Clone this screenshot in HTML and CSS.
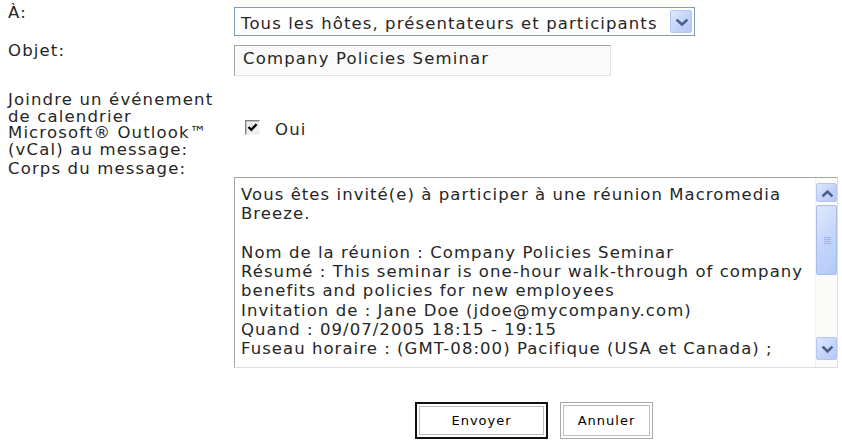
FILE: index.html
```html
<!DOCTYPE html>
<html lang="fr">
<head>
<meta charset="utf-8">
<title>Message</title>
<link rel="stylesheet" href="styles.css">
</head>
<body>
<div class="form">
  <div class="row r-to">
    <div class="label">À:</div>
    <div class="field">
      <div class="select">
        <span class="select-text">Tous les hôtes, présentateurs et participants</span>
        <span class="xp-btn select-btn"><svg viewBox="0 0 22 23" width="22" height="23"><path d="M6.5 9.5 L11 13.5 L15.5 9.5" fill="none" stroke="#4d5f86" stroke-width="2.6" stroke-linecap="square"/></svg></span>
      </div>
    </div>
  </div>
  <div class="row r-subject">
    <div class="label">Objet:</div>
    <div class="field"><div class="input">Company Policies Seminar</div></div>
  </div>
  <div class="row r-cal">
    <div class="label">Joindre un événement de calendrier Microsoft® Outlook™ (vCal) au message:</div>
    <div class="field field-check">
      <span class="checkbox"><svg viewBox="0 0 11 11" width="11" height="11"><path d="M1.5 5 L4.3 7.8 L9.6 2.2" fill="none" stroke="#000" stroke-width="2.4"/></svg></span>
      <span class="check-label">Oui</span>
    </div>
  </div>
  <div class="row r-body">
    <div class="label">Corps du message:</div>
    <div class="field">
      <div class="textarea">
        <div class="ta-text">Vous êtes invité(e) à participer à une réunion Macromedia
Breeze.

Nom de la réunion : Company Policies Seminar
Résumé : This seminar is one-hour walk-through of company
benefits and policies for new employees
Invitation de : Jane Doe (jdoe@mycompany.com)
Quand : 09/07/2005 18:15 - 19:15
Fuseau horaire : (GMT-08:00) Pacifique (USA et Canada) ;</div>
        <div class="scrollbar">
          <span class="xp-btn sb-up"><svg viewBox="0 0 21 19" width="21" height="19"><path d="M6.5 11.5 L10.5 7.5 L14.5 11.5" fill="none" stroke="#4d5f86" stroke-width="2.6" stroke-linecap="square"/></svg></span>
          <span class="xp-btn sb-thumb"><svg viewBox="0 0 21 70" width="21" height="70"><path d="M7 31.5 H14 M7 33.5 H14 M7 35.5 H14 M7 37.5 H14" stroke="#9fb3e2" stroke-width="1"/></svg></span>
          <span class="sb-track"></span>
          <span class="xp-btn sb-down"><svg viewBox="0 0 21 23" width="21" height="23"><path d="M6.5 9.5 L10.5 13.5 L14.5 9.5" fill="none" stroke="#4d5f86" stroke-width="2.6" stroke-linecap="square"/></svg></span>
        </div>
      </div>
    </div>
  </div>
  <div class="actions">
    <button class="btn btn-default" type="button">Envoyer</button>
    <button class="btn btn-cancel" type="button">Annuler</button>
  </div>
</div>
</body>
</html>
```

FILE: styles.css
```css
html, body {
  margin: 0;
  background: #ffffff;
}

body {
  font-family: "DejaVu Sans", Verdana, sans-serif;
  font-size: 16.5px;
  color: #262626;
  letter-spacing: 1.15px;
}

.form {
  padding: 5px 0 0 8px;
}

.row {
  display: flex;
}

.label {
  width: 226px;
  flex: none;
  line-height: 16.7px;
  padding-right: 8px;
  box-sizing: border-box;
}

.field {
  width: 604px;
  flex: none;
}

/* Row 1 : select */
.r-to .field {
  padding-top: 2px;
}

.select {
  width: 461px;
  height: 29px;
  box-sizing: border-box;
  border: 1px solid #7f9db9;
  background: #ffffff;
  display: flex;
}

.select-text {
  flex: 1;
  padding: 6px 0 0 6px;
  line-height: 19px;
  white-space: nowrap;
  overflow: hidden;
  letter-spacing: 1.1px;
}

.xp-btn {
  display: block;
  box-sizing: border-box;
  border: 1px solid #b3c5f0;
  border-radius: 2px;
  background: linear-gradient(135deg, #dfe8fe 0%, #c3d4fb 55%, #b5c9f6 100%);
}

.xp-btn svg {
  display: block;
}

.select-btn {
  width: 22px;
  margin: 2px 2px 2px 0;
  flex: none;
  overflow: hidden;
}

/* Row 2 : input */
.r-subject {
  margin-top: 7px;
}

.r-subject .field {
  padding-top: 2px;
}

.input {
  width: 377px;
  height: 31px;
  box-sizing: border-box;
  border: 1px solid;
  border-color: #a4a4a4 #e3e3e3 #e3e3e3 #a4a4a4;
  background: #fafafa;
  padding: 3px 0 0 8px;
  line-height: 19px;
  white-space: nowrap;
}

/* Row 3 : checkbox */
.r-cal {
  margin-top: 16px;
}

.field-check {
  display: flex;
  align-items: flex-start;
  padding-top: 28px;
}

.checkbox {
  width: 15px;
  height: 15px;
  box-sizing: border-box;
  margin-left: 11px;
  border: 1px solid;
  border-color: #808080 #f4f4f4 #f4f4f4 #808080;
  box-shadow: inset 1px 1px 0 #c4c4c4;
  background: #eeeeee;
  display: flex;
  align-items: center;
  justify-content: center;
}

.checkbox svg {
  display: block;
}

.check-label {
  margin-left: 15px;
  margin-top: 2px;
  line-height: 16.7px;
}

/* Row 4 : textarea */
.r-body {
  margin-top: 2px;
}

.textarea {
  margin-top: 16px;
  width: 604px;
  height: 191px;
  box-sizing: border-box;
  border: 1px solid;
  border-color: #a6a6a6 #dedede #dedede #a6a6a6;
  background: #ffffff;
  display: flex;
}

.ta-text {
  flex: 1;
  padding: 7px 0 0 6px;
  line-height: 19.3px;
  white-space: pre;
  overflow: hidden;
  letter-spacing: 1.05px;
}

.scrollbar {
  width: 21px;
  flex: none;
  display: flex;
  flex-direction: column;
  padding: 5px 0 7px;
  background: #fbfbf9;
  border-left: 1px solid #f0f0ec;
}

.sb-up {
  height: 19px;
  overflow: hidden;
}

.sb-thumb {
  margin-top: 3px;
  height: 70px;
  overflow: hidden;
  border-color: #a9bdeb;
}

.sb-track {
  flex: 1;
}

.sb-down {
  height: 23px;
  overflow: hidden;
}

/* Buttons */
.actions {
  margin: 34px 0 0 226px;
  width: 604px;
  box-sizing: border-box;
  padding-right: 4px;
  display: flex;
  justify-content: center;
  gap: 12px;
}

.btn {
  height: 37px;
  box-sizing: border-box;
  padding: 0;
  font-family: "DejaVu Sans", Verdana, sans-serif;
  font-size: 13px;
  letter-spacing: 1px;
  color: #000000;
  background: #ffffff;
  border: 1px solid #a8a8a8;
  box-shadow: inset 0 0 0 2px #ffffff, inset 0 0 0 3px #bdbdbd;
}

.btn-default {
  width: 133px;
  border: 2px solid #111111;
}

.btn-cancel {
  width: 93px;
}
```
